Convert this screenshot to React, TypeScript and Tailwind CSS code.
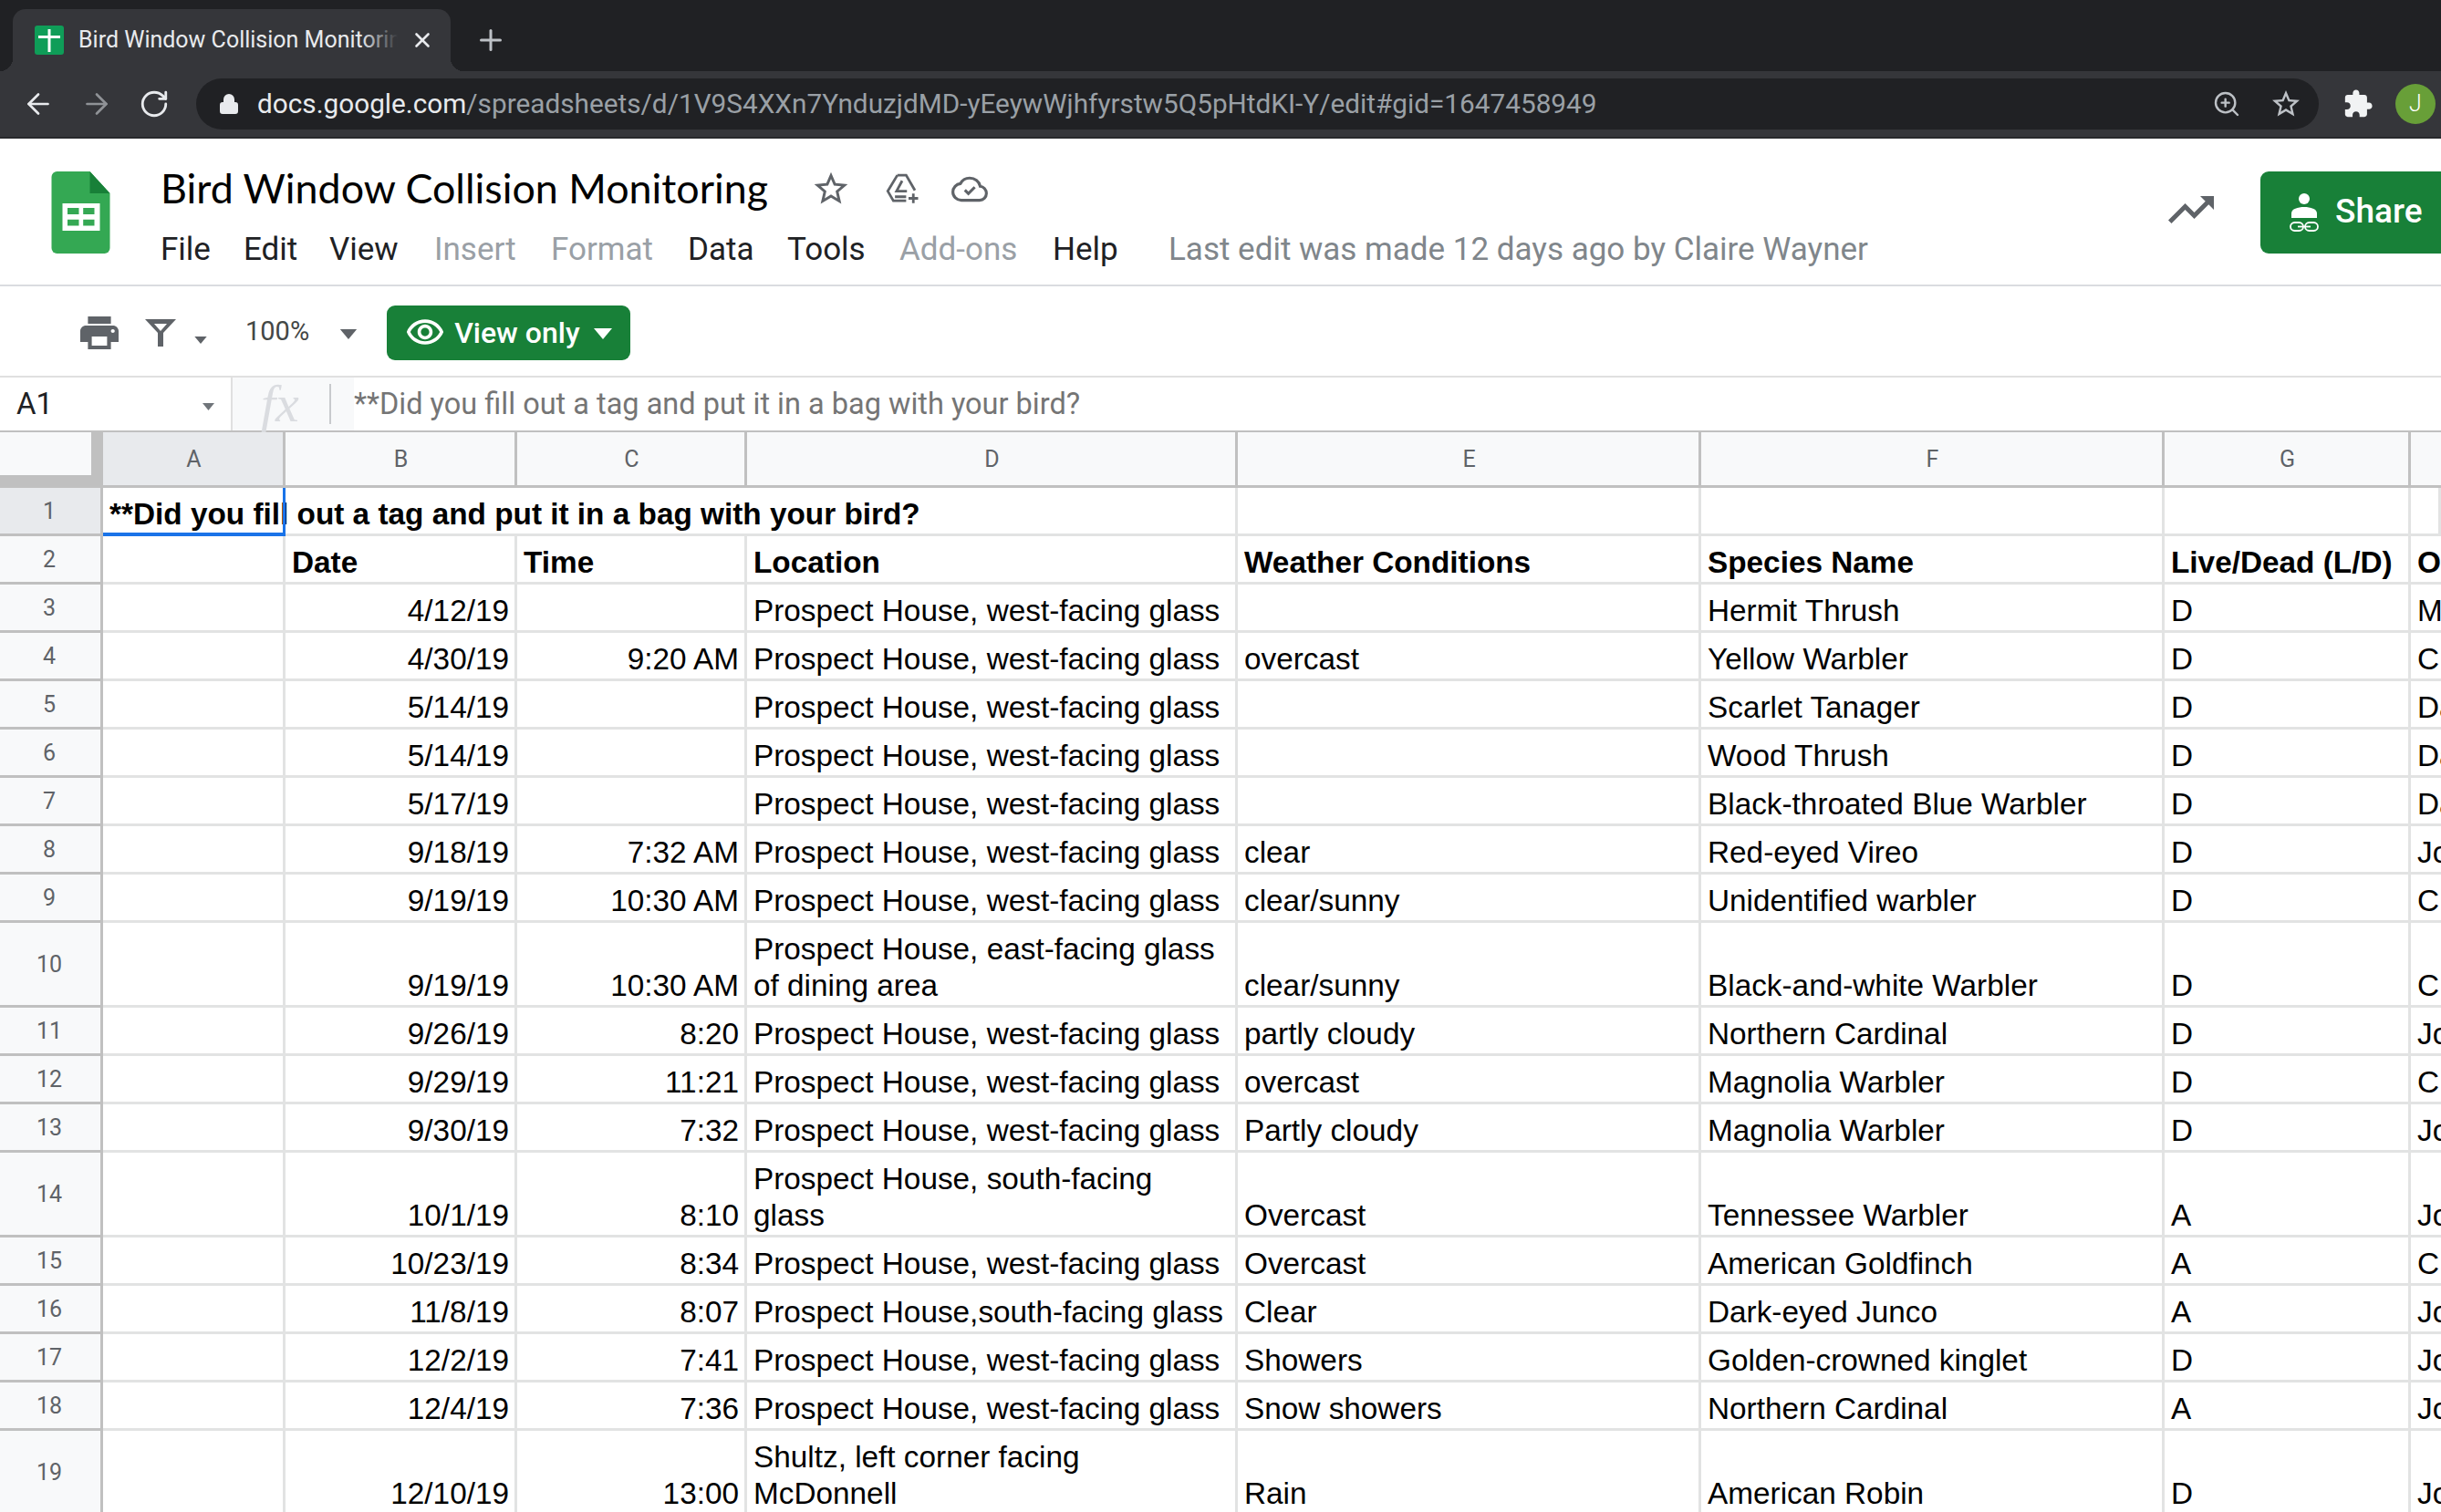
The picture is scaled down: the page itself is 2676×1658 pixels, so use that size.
import { Plus, X, ArrowLeft, ArrowRight, RotateCw, Lock, ZoomIn } from "lucide-react";

const STAR =
  "M22 9.24l-7.19-.62L12 2 9.19 8.63 2 9.24l5.46 4.73L5.82 21 12 17.27 18.18 21l-1.63-7.03L22 9.24zM12 15.4l-3.76 2.27 1-4.28-3.32-2.88 4.38-.38L12 6.1l1.71 4.04 4.38.38-3.32 2.88 1 4.28L12 15.4z";
const PUZZLE =
  "M20.5 11H19V7c0-1.1-.9-2-2-2h-4V3.5C13 2.12 11.88 1 10.5 1S8 2.12 8 3.5V5H4c-1.1 0-1.99.9-1.99 2v3.8H3.5c1.49 0 2.7 1.21 2.7 2.7s-1.21 2.7-2.7 2.7H2V20c0 1.1.9 2 2 2h3.8v-1.5c0-1.49 1.21-2.7 2.7-2.7 1.49 0 2.7 1.21 2.7 2.7V22H17c1.1 0 2-.9 2-2v-4h1.5c1.38 0 2.5-1.12 2.5-2.5S21.88 11 20.5 11z";
const PRINT =
  "M19 8H5c-1.66 0-3 1.34-3 3v6h4v4h12v-4h4v-6c0-1.66-1.34-3-3-3zm-3 11H8v-5h8v5zm3-7c-.55 0-1-.45-1-1s.45-1 1-1 1 .45 1 1-.45 1-1 1zm-1-9H6v4h12V3z";
const EYE =
  "M12 6c3.79 0 7.17 2.13 8.82 5.5C19.17 14.87 15.79 17 12 17s-7.17-2.13-8.82-5.5C4.83 8.13 8.21 6 12 6m0-2C7 4 2.73 7.11 1 11.5 2.73 15.89 7 19 12 19s9.27-3.11 11-7.5C21.27 7.11 17 4 12 4zm0 5c1.38 0 2.5 1.12 2.5 2.5S13.38 14 12 14s-2.5-1.12-2.5-2.5S10.62 9 12 9m0-2c-2.48 0-4.5 2.02-4.5 4.5S9.52 16 12 16s4.5-2.02 4.5-4.5S14.48 7 12 7z";

const WEST = "Prospect House, west-facing glass";

const COLS = "grid grid-cols-[113px_200px_254px_252px_538px_508px_508px_270px_1fr]";

type RowData = {
  n: number;
  date: string;
  time?: string;
  loc: string;
  weather?: string;
  species: string;
  ld: string;
  last: string;
  tall?: boolean;
};

const rows: RowData[] = [
  { n: 3, date: "4/12/19", loc: WEST, species: "Hermit Thrush", ld: "D", last: "M" },
  { n: 4, date: "4/30/19", time: "9:20 AM", loc: WEST, weather: "overcast", species: "Yellow Warbler", ld: "D", last: "C" },
  { n: 5, date: "5/14/19", loc: WEST, species: "Scarlet Tanager", ld: "D", last: "Da" },
  { n: 6, date: "5/14/19", loc: WEST, species: "Wood Thrush", ld: "D", last: "Da" },
  { n: 7, date: "5/17/19", loc: WEST, species: "Black-throated Blue Warbler", ld: "D", last: "Da" },
  { n: 8, date: "9/18/19", time: "7:32 AM", loc: WEST, weather: "clear", species: "Red-eyed Vireo", ld: "D", last: "Jo" },
  { n: 9, date: "9/19/19", time: "10:30 AM", loc: WEST, weather: "clear/sunny", species: "Unidentified warbler", ld: "D", last: "C" },
  { n: 10, date: "9/19/19", time: "10:30 AM", loc: "Prospect House, east-facing glass of dining area", weather: "clear/sunny", species: "Black-and-white Warbler", ld: "D", last: "C", tall: true },
  { n: 11, date: "9/26/19", time: "8:20", loc: WEST, weather: "partly cloudy", species: "Northern Cardinal", ld: "D", last: "Jo" },
  { n: 12, date: "9/29/19", time: "11:21", loc: WEST, weather: "overcast", species: "Magnolia Warbler", ld: "D", last: "C" },
  { n: 13, date: "9/30/19", time: "7:32", loc: WEST, weather: "Partly cloudy", species: "Magnolia Warbler", ld: "D", last: "Jo" },
  { n: 14, date: "10/1/19", time: "8:10", loc: "Prospect House, south-facing glass", weather: "Overcast", species: "Tennessee Warbler", ld: "A", last: "Jo", tall: true },
  { n: 15, date: "10/23/19", time: "8:34", loc: WEST, weather: "Overcast", species: "American Goldfinch", ld: "A", last: "C" },
  { n: 16, date: "11/8/19", time: "8:07", loc: "Prospect House,south-facing glass", weather: "Clear", species: "Dark-eyed Junco", ld: "A", last: "Jo" },
  { n: 17, date: "12/2/19", time: "7:41", loc: WEST, weather: "Showers", species: "Golden-crowned kinglet", ld: "D", last: "Jo" },
  { n: 18, date: "12/4/19", time: "7:36", loc: WEST, weather: "Snow showers", species: "Northern Cardinal", ld: "A", last: "Jo" },
  { n: 19, date: "12/10/19", time: "13:00", loc: "Shultz, left corner facing McDonnell", weather: "Rain", species: "American Robin", ld: "D", last: "Jo", tall: true },
];

function Caret({ className }: { className: string }) {
  return (
    <svg viewBox="0 0 10 6" className={className} fill="currentColor">
      <path d="M0 0h10L5 6z" />
    </svg>
  );
}

function RowHead({ n, active }: { n: number; active?: boolean }) {
  return (
    <div
      className={`flex items-center justify-center border-r-[3px] border-b-[3px] border-[#c0c0c0] pr-[2px] pt-[2px] font-['Roboto',sans-serif] text-[25px] text-[#5f6368] ${
        active ? "bg-[#e8eaed]" : "bg-[#f8f9fa]"
      }`}
    >
      {n}
    </div>
  );
}

function Cell({ children, right, bold }: { children?: React.ReactNode; right?: boolean; bold?: boolean }) {
  return (
    <div
      className={`flex items-end border-r-[3px] border-b-[3px] border-[#e2e3e3] pb-[1px] ${
        right ? "justify-end pl-[8px] pr-[6px]" : "pl-[7px] pr-[8px]"
      } ${bold ? "font-bold" : ""}`}
    >
      <span className={right ? "text-right" : ""}>{children}</span>
    </div>
  );
}

function ColHead({ label, active }: { label: string; active?: boolean }) {
  return (
    <div
      className={`flex items-center justify-center border-r-[3px] border-[#c0c0c0] pl-[2px] ${
        active ? "bg-[#e8eaed]" : "bg-[#f8f9fa]"
      }`}
    >
      {label}
    </div>
  );
}

function BrowserChrome() {
  return (
    <div className="font-['Roboto',sans-serif]">
      <div className="flex h-[78px] items-end bg-[#202124] pl-[14px]">
        <div className="relative flex h-[68px] w-[480px] items-center rounded-t-[14px] bg-[#35363a] pl-[24px] before:absolute before:bottom-0 before:left-[-14px] before:h-[14px] before:w-[14px] before:bg-[radial-gradient(circle_at_0_0,transparent_14px,#35363a_14px)] after:absolute after:bottom-0 after:right-[-14px] after:h-[14px] after:w-[14px] after:bg-[radial-gradient(circle_at_100%_0,transparent_14px,#35363a_14px)]">
          <svg viewBox="0 0 32 32" className="h-[32px] w-[32px] shrink-0">
            <rect width="32" height="32" rx="3" fill="#0f9d58" />
            <path d="M4 11h24v3H4zM14.500 4h3v25h-3z" fill="#fff" />
          </svg>
          <div className="relative ml-[16px] w-[350px] overflow-hidden whitespace-nowrap text-[25px] text-[#e8eaed]">
            Bird Window Collision Monitoring
            <div className="absolute inset-y-0 right-0 w-[40px] bg-gradient-to-r from-transparent to-[#35363a]" />
          </div>
          <X className="ml-[14px] h-[26px] w-[26px] text-[#e8eaed]" strokeWidth={2.4} />
        </div>
        <Plus className="mb-[16px] ml-[26px] h-[36px] w-[36px] text-[#bdc1c6]" strokeWidth={2} />
      </div>
      <div className="flex h-[74px] items-start border-b-[2px] border-[#28292c] bg-[#35363a] pt-[8px]">
        <div className="flex h-[56px] w-[215px] items-center pl-[24px]">
          <ArrowLeft className="h-[36px] w-[36px] text-[#e8eaed]" strokeWidth={1.8} />
          <ArrowRight className="ml-[28px] h-[36px] w-[36px] text-[#8f9296]" strokeWidth={1.8} />
          <RotateCw className="ml-[28px] h-[34px] w-[34px] text-[#e8eaed]" strokeWidth={2} />
        </div>
        <div className="flex h-[56px] w-[2327px] items-center rounded-full bg-[#202124] pl-[24px]">
          <Lock className="h-[24px] w-[24px] text-[#e8eaed]" fill="#e8eaed" strokeWidth={2} />
          <div className="ml-[19px] text-[29.75px] text-[#9aa0a6]">
            <span className="text-[#e8eaed]">docs.google.com</span>
            /spreadsheets/d/1V9S4XXn7YnduzjdMD-yEeywWjhfyrstw5Q5pHtdKI-Y/edit#gid=1647458949
          </div>
          <div className="ml-auto flex items-center pr-[18px]">
            <ZoomIn className="h-[32px] w-[32px] text-[#bdc1c6]" strokeWidth={1.8} />
            <svg viewBox="0 0 24 24" className="ml-[31px] h-[36px] w-[36px]" fill="#bdc1c6">
              <path d={STAR} />
            </svg>
          </div>
        </div>
        <div className="ml-[26px] flex h-[56px] items-center">
          <svg viewBox="0 0 24 24" className="h-[34px] w-[34px]" fill="#f1f3f4">
            <path d={PUZZLE} />
          </svg>
          <div className="ml-[24px] flex h-[44px] w-[44px] items-center justify-center rounded-full bg-[#689f38] text-[25px] font-light text-white">
            J
          </div>
        </div>
      </div>
    </div>
  );
}

function DocHeader() {
  return (
    <div className="flex h-[162px] items-start border-b-[2px] border-[#dadce0] bg-white pl-[56px] font-['Roboto',sans-serif]">
      <svg viewBox="0 0 64 90" className="mt-[36px] h-[90px] w-[65px] shrink-0">
        <path d="M6 0h36l22 24v60a6 6 0 0 1-6 6H6a6 6 0 0 1-6-6V6a6 6 0 0 1 6-6z" fill="#34a853" />
        <path d="M42 0l22 24H42z" fill="#188038" />
        <path
          d="M12 35h41v30H12zM17.500 40v7H30v-7zm17.200 0v7H47v-7zM17.500 52.700v6.800H30v-6.800zm17.200 0v6.800H47v-6.800z"
          fill="#fff"
          fillRule="evenodd"
        />
      </svg>
      <div className="ml-[55px] flex flex-col">
        <div className="mt-[28px] flex h-[54px] items-center">
          <div className="w-[684px] whitespace-nowrap font-['Lato',sans-serif] text-[44.8px] text-black">
            Bird Window Collision Monitoring
          </div>
          <svg viewBox="0 0 24 24" className="ml-[29px] h-[44px] w-[44px]" fill="#5f6368">
            <path d={STAR} />
          </svg>
          <svg viewBox="0 0 24 24" className="ml-[35px] h-[42px] w-[42px]" fill="none" stroke="#5f6368" strokeWidth="1.6">
            <path d="M9 3.500h5.500L20 13M14.500 19.500H6.500L3 13.500 9 3.500M12 7l-3.500 6.500H15M7.500 17h7" />
            <path d="M19 15v6M16 18h6" />
          </svg>
          <svg viewBox="0 0 24 24" className="ml-[32px] h-[42px] w-[42px]" fill="none" stroke="#5f6368" strokeWidth="1.8">
            <path d="M18.600 10.400C18 7.500 15.300 5.300 12 5.300c-2.500 0-4.700 1.400-5.800 3.500C3.600 9.100 1.500 11.300 1.500 14c0 2.900 2.400 5.200 5.300 5.200h11.400c2.400 0 4.300-1.900 4.300-4.300 0-2.300-1.800-4.300-3.900-4.500z" />
            <path d="M9 12.800l2.200 2.200 4-4" />
          </svg>
        </div>
        <div className="mt-[18px] flex h-[44px] items-center whitespace-nowrap text-[35px] text-[#202124]">
          <span className="w-[91px]">File</span>
          <span className="w-[94px]">Edit</span>
          <span className="w-[115px]">View</span>
          <span className="w-[128px] text-[#9aa0a6]">Insert</span>
          <span className="w-[150px] text-[#9aa0a6]">Format</span>
          <span className="w-[109px]">Data</span>
          <span className="w-[123px]">Tools</span>
          <span className="w-[168px] text-[#9aa0a6]">Add-ons</span>
          <span className="w-[127px]">Help</span>
          <span className="text-[#80868b]">Last edit was made 12 days ago by Claire Wayner</span>
        </div>
      </div>
      <div className="ml-auto mt-[36px] flex items-center">
        <svg viewBox="2 6 20 12" className="mt-[-6px] h-[30px] w-[50px]" preserveAspectRatio="none" fill="#5f6368">
          <path d="M16 6l2.290 2.290-4.880 4.880-4-4L2 16.590 3.410 18l6-6 4 4 6.300-6.290L22 12V6z" />
        </svg>
        <div className="ml-[51px] flex h-[90px] w-[198px] items-center rounded-l-[9px] bg-[#188038] pl-[32px]">
          <svg viewBox="0 0 32 44" className="h-[44px] w-[32px]" fill="none">
            <circle cx="16" cy="7" r="6" fill="#fff" />
            <path d="M2 28v-5c0-5 7-7 14-7s14 2 14 7v5z" fill="#fff" />
            <rect x="1" y="33" width="14" height="9" rx="4.500" stroke="#fff" strokeWidth="1.800" />
            <rect x="17" y="33" width="14" height="9" rx="4.500" stroke="#fff" strokeWidth="1.800" />
            <path d="M9 37.500h14" stroke="#fff" strokeWidth="1.800" />
          </svg>
          <span className="mb-[3px] ml-[18px] text-[37px] font-medium text-white">Share</span>
        </div>
      </div>
    </div>
  );
}

function Toolbar() {
  return (
    <div className="flex h-[100px] items-center border-b-[2px] border-[#e0e0e0] bg-white pl-[88px] pt-[3px] font-['Roboto',sans-serif] text-[#5f6368]">
      <svg viewBox="2 3 20 18" className="h-[36px] w-[42px]" preserveAspectRatio="none" fill="#5f6368">
        <path d={PRINT} />
      </svg>
      <svg viewBox="0 0 36 32" className="ml-[28px] h-[32px] w-[36px]" fill="none">
        <path d="M1 1h34L21 16v15h-6V16z" fill="#5f6368" />
        <path d="M11 6h14l-7 8z" fill="#fff" />
      </svg>
      <Caret className="ml-[19px] mt-[17px] h-[8px] w-[14px] text-[#5f6368]" />
      <span className="ml-[42px] mt-[-2px] text-[29px] text-[#444746]">100%</span>
      <Caret className="ml-[32px] mt-[4px] h-[11px] w-[22px] text-[#5f6368]" />
      <div className="ml-[31px] flex h-[60px] w-[267px] items-center rounded-[9px] bg-[#188038] pl-[20px] text-white">
        <svg viewBox="0 0 24 24" className="h-[44px] w-[44px]" fill="#fff">
          <path d={EYE} />
        </svg>
        <span className="ml-[10px] text-[32px] font-medium">View only</span>
        <Caret className="ml-[15px] mt-[2px] h-[12px] w-[20px] text-white" />
      </div>
    </div>
  );
}

function FormulaBar() {
  return (
    <div className="flex h-[60px] items-stretch border-b-[2px] border-[#c0c0c0] bg-white font-['Roboto',sans-serif]">
      <div className="flex w-[255px] items-center border-r-[2px] border-[#e0e0e0] pl-[18px] text-[33px] text-[#202124]">
        A1
        <Caret className="ml-auto mr-[18px] mt-[6px] h-[8px] w-[13px] text-[#70757a]" />
      </div>
      <div className="flex w-[133px] items-center bg-[#f8f9fa] pl-[31px]">
        <span className="w-[75px] font-['Liberation_Serif',serif] text-[58px] italic leading-none text-[#dadce0]">
          fx
        </span>
        <div className="h-[44px] w-[2px] bg-[#c8cacd]" />
      </div>
      <div className="flex items-center text-[32.5px] text-[#757575]">
        **Did you fill out a tag and put it in a bag with your bird?
      </div>
    </div>
  );
}

function Sheet() {
  return (
    <div className="min-h-0 flex-1 overflow-hidden bg-white font-['Liberation_Sans',sans-serif] text-[33.35px] leading-[40px] text-black">
      <div className={`${COLS} h-[61px] border-b-[3px] border-[#c0c0c0] font-['Roboto',sans-serif] text-[25px] leading-none text-[#5f6368]`}>
        <div className="relative border-r-[3px] border-[#c0c0c0] bg-[#f8f9fa]">
          <div className="absolute inset-x-0 bottom-0 right-[10px] h-[11px] bg-[#c0c0c0]" />
          <div className="absolute inset-y-0 right-0 w-[10px] bg-[#c0c0c0]" />
        </div>
        <ColHead label="A" active />
        <ColHead label="B" />
        <ColHead label="C" />
        <ColHead label="D" />
        <ColHead label="E" />
        <ColHead label="F" />
        <ColHead label="G" />
        <div className="bg-[#f8f9fa]" />
      </div>

      <div className={`${COLS} relative h-[53px]`}>
        <RowHead n={1} active />
        <div className="col-span-4 flex items-end whitespace-nowrap border-r-[3px] border-b-[3px] border-[#e2e3e3] pb-[1px] pl-[7px] pr-[8px] font-bold">
          **Did you fill out a tag and put it in a bag with your bird?
        </div>
        <Cell />
        <Cell />
        <Cell />
        <Cell />
        <div className="pointer-events-none absolute left-[113px] top-0 h-[53px] w-[200px] border-r-[3px] border-b-[4px] border-[#1a73e8]" />
      </div>

      <div className={`${COLS} h-[53px]`}>
        <RowHead n={2} />
        <Cell />
        <Cell bold>Date</Cell>
        <Cell bold>Time</Cell>
        <Cell bold>Location</Cell>
        <Cell bold>Weather Conditions</Cell>
        <Cell bold>Species Name</Cell>
        <Cell bold>Live/Dead (L/D)</Cell>
        <Cell bold>O</Cell>
      </div>

      {rows.map((r) => (
        <div key={r.n} className={`${COLS} ${r.tall ? "h-[93px]" : "h-[53px]"}`}>
          <RowHead n={r.n} />
          <Cell />
          <Cell right>{r.date}</Cell>
          <Cell right>{r.time}</Cell>
          <Cell>{r.loc}</Cell>
          <Cell>{r.weather}</Cell>
          <Cell>{r.species}</Cell>
          <Cell>{r.ld}</Cell>
          <Cell>{r.last}</Cell>
        </div>
      ))}
    </div>
  );
}

export default function App() {
  return (
    <div className="flex h-[1658px] w-[2676px] flex-col overflow-hidden bg-white">
      <BrowserChrome />
      <DocHeader />
      <Toolbar />
      <FormulaBar />
      <Sheet />
    </div>
  );
}
